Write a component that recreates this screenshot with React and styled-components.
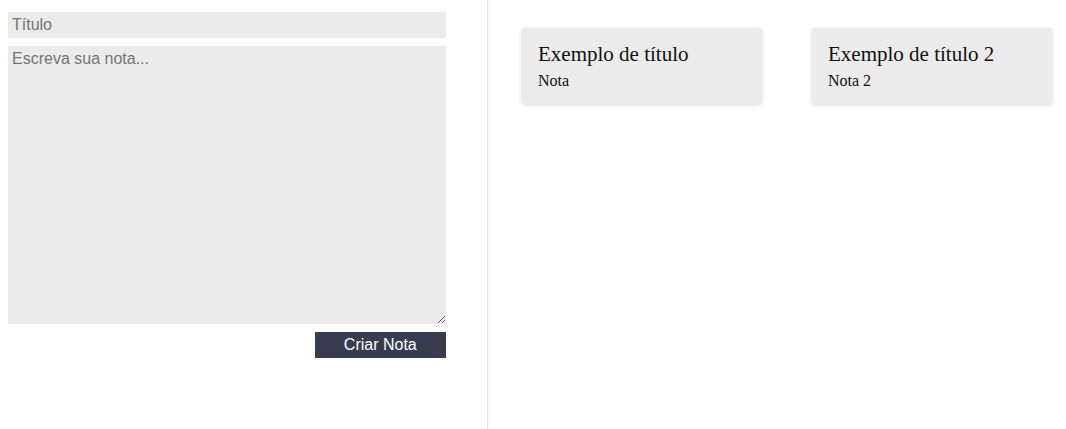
import styled, { createGlobalStyle } from "styled-components";

const GlobalStyle = createGlobalStyle`
  body {
    margin: 0;
    background: #fff;
    font-family: "Liberation Sans", Arial, sans-serif;
  }
`;

const Page = styled.div`
  display: flex;
  min-height: 100vh;
`;

const Sidebar = styled.aside`
  width: 488px;
  box-sizing: border-box;
  padding: 12px 41px 0 8px;
  border-right: 1px solid #e2e2e2;
  box-shadow: 1px 0 3px rgba(0, 0, 0, 0.05);
`;

const Form = styled.form`
  display: flex;
  flex-direction: column;
  gap: 8px;
`;

const Field = styled.input`
  height: 26px;
  box-sizing: border-box;
  padding: 0 4px;
  border: none;
  outline: none;
  background: #ebebeb;
  font-family: "Liberation Sans", Arial, sans-serif;
  font-size: 16px;
  color: #333;

  &::placeholder {
    color: #757575;
  }
`;

const NoteArea = styled.textarea`
  height: 278px;
  box-sizing: border-box;
  padding: 4px;
  border: none;
  outline: none;
  background: #ebebeb;
  font-family: "Liberation Sans", Arial, sans-serif;
  font-size: 16px;
  color: #333;

  &::placeholder {
    color: #757575;
  }
`;

const Submit = styled.button`
  align-self: flex-end;
  width: 30%;
  height: 26px;
  border: none;
  background: #373d4f;
  color: #fff;
  font-family: "Liberation Sans", Arial, sans-serif;
  font-size: 16px;
  cursor: pointer;
`;

const Board = styled.main`
  flex: 1;
  padding: 28px 0 0 34px;
`;

const Notes = styled.div`
  display: flex;
  flex-wrap: wrap;
  gap: 50px;
`;

const Card = styled.div`
  width: 240px;
  height: 76px;
  box-sizing: border-box;
  padding: 14px 16px 12px;
  background: #ebebeb;
  border-radius: 4px;
  box-shadow: 0 1px 4px rgba(0, 0, 0, 0.16);
  font-family: "Liberation Serif", "Times New Roman", serif;
  color: #111;
`;

const CardTitle = styled.h2`
  margin: 0 0 6px;
  font-size: 21px;
  font-weight: 400;
  line-height: 24px;
`;

const CardText = styled.p`
  margin: 0;
  font-size: 16px;
  line-height: 18px;
`;

const notes = [
  { id: 1, title: "Exemplo de título", text: "Nota" },
  { id: 2, title: "Exemplo de título 2", text: "Nota 2" },
];

const App = () => {
  return (
    <>
      <GlobalStyle />
      <Page>
        <Sidebar>
          <Form onSubmit={(e) => e.preventDefault()}>
            <Field type="text" placeholder="Título" />
            <NoteArea placeholder="Escreva sua nota..." />
            <Submit type="submit">Criar Nota</Submit>
          </Form>
        </Sidebar>
        <Board>
          <Notes>
            {notes.map((note) => (
              <Card key={note.id}>
                <CardTitle>{note.title}</CardTitle>
                <CardText>{note.text}</CardText>
              </Card>
            ))}
          </Notes>
        </Board>
      </Page>
    </>
  );
};

export default App;
